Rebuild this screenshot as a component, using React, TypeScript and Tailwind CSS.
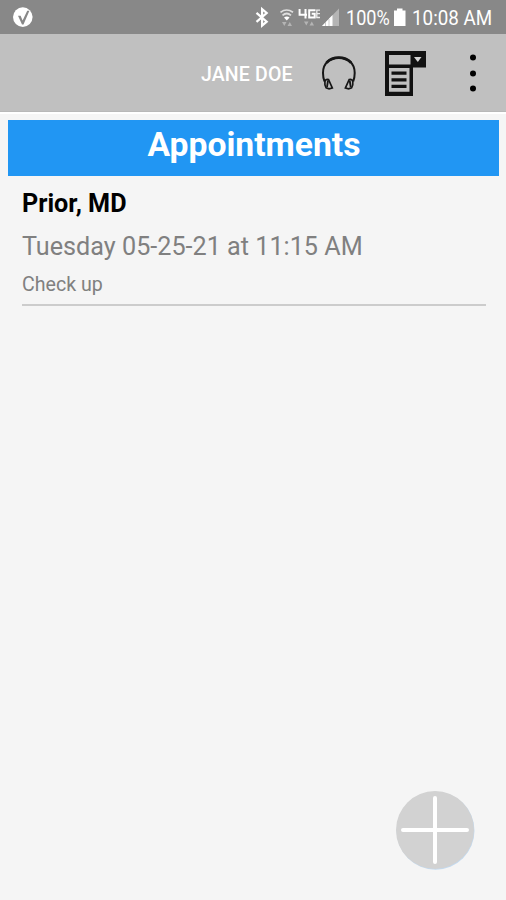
function StatusBar() {
  return (
    <div className="flex h-[34px] shrink-0 items-center bg-[#888888] text-white">
      <svg className="ml-[12px] h-[22px] w-[22px]" viewBox="0 0 22 22" aria-hidden="true">
        <circle cx="10.8" cy="11.1" r="9.8" fill="#fff" />
        <path d="M6 9.800h2.600l2 4.600L15.200 4.800h2.200L11.500 18.500h-1.500z" fill="#888" />
      </svg>
      <div className="ml-auto flex items-center">
        <svg className="h-[34px] w-[90px]" viewBox="250 0 90 34" aria-hidden="true">
          <path d="M255.500 12.800l10.200 8.900-4.600 4V9.100l4.600 3.900-10.200 8.900" fill="none" stroke="#fff" strokeWidth="2.200" />
          <g fill="none" stroke="#dedede">
            <path d="M279.500 12.300q6-4.600 12.500 0" strokeWidth="1.700" />
            <path d="M281.500 15.300q4.200-3.600 8.500 0" strokeWidth="1.700" />
          </g>
          <path d="M283 17.500q2.800-2 5.600 0l-2.800 3z" fill="#fff" />
          <path d="M281 22h4.500l-2.200 4zm5.500 4h4.500l-2.200-4zM303 21.500h4.500l-2.200 4zm5.500 4h4.500l-2.200-4z" fill="#b4b4b4" />
          <g fill="none" stroke="#fff">
            <path d="M298.600 9v5.800h7.400M304.500 9v9.500" strokeWidth="2" />
            <path d="M314.500 10.200h-6.300v7.200h5.500v-3.600h-3" strokeWidth="2" />
            <path d="M319 10.200h-3.200v7.300h3.200M315.500 13.700h3.500" strokeWidth="1.300" opacity=".85" />
          </g>
          <path d="M338 8.500V26h-17z" fill="#b5b5b5" />
          <path d="M331.500 15v11H321z" fill="#fff" />
          <path d="M324.500 22v4m3.500-7v7" stroke="#b5b5b5" strokeWidth=".7" />
        </svg>
        <span className="ml-[5px] w-[45px] whitespace-nowrap pt-[2px] text-[21px] leading-[24px]">
          <span className="inline-block origin-left scale-x-[.86]">100%</span>
        </span>
        <svg className="ml-[2px] h-[18px] w-[14px]" viewBox="0 0 14 18" aria-hidden="true">
          <path d="M4 .5h5.500v2h3V18H1V2.500h3z" fill="#fff" />
        </svg>
        <span className="ml-[3px] w-[96px] whitespace-nowrap pl-[2px] pt-[2px] text-[21px] leading-[24px]">
          <span className="inline-block origin-left scale-x-[.895]">10:08 AM</span>
        </span>
      </div>
    </div>
  );
}

function Toolbar() {
  return (
    <header className="flex h-[78px] shrink-0 items-center border-b border-[#b8b8b8] bg-[#c0c0c0]">
      <span className="ml-[201px] w-[100px] whitespace-nowrap pt-[5px] text-[19.500px] font-medium tracking-[.15px] text-white">JANE DOE</span>
      <button className="ml-[17px] h-[44px] w-[42px]" aria-label="Headphones">
        <svg className="h-[44px] w-[42px]" viewBox="318 51 42 44" fill="none" stroke="#161616" aria-hidden="true">
          <path d="M324.500 81.500q-1.500-4-1.500-8.500C323 63 330 57.700 338.800 57.700S354.700 63 354.700 73q0 4.500-1.500 8.500" strokeWidth="2" />
          <path d="M326.500 62.700q5-5 12.300-5t12.300 5" strokeWidth="2.800" />
          <path d="M328.500 79.500q-3-.5-3.600 2-.5 3.800 1.200 6.300l3 1 3.200-.8zM349.200 79.500q3-.5 3.600 2 .5 3.800-1.200 6.300l-3 1-3.200-.8z" strokeWidth="1.700" />
          <path d="M328 80.500l-1 6.500m22.700-6.500l1 6.500" strokeWidth="1.800" />
        </svg>
      </button>
      <button className="ml-[24px] h-[46px] w-[44px]" aria-label="Form">
        <svg className="h-[46px] w-[44px]" viewBox="384 50 44 46" aria-hidden="true">
          <path d="M385 51h41v16.500h-13V96h-28z" fill="#111" />
          <path d="M389 55h21.500v9.500H389zM389 68h20.500v23.800H389z" fill="#c0c0c0" />
          <path d="M414 57h7.500l-3.700 5z" fill="#d5d5d5" />
          <path d="M391.500 73.200h15m-15 6.600h15M391.500 86.400h15" stroke="#111" strokeWidth="3.200" />
        </svg>
      </button>
      <button className="ml-[41px] flex h-[37px] w-[8px] translate-y-[.5px] flex-col items-center justify-between" aria-label="More options">
        <span className="h-[6px] w-[6px] rounded-full bg-black" />
        <span className="h-[6px] w-[6px] rounded-full bg-black" />
        <span className="h-[6px] w-[6px] rounded-full bg-black" />
      </button>
    </header>
  );
}

export default function App() {
  return (
    <div className="flex h-[900px] w-[506px] flex-col overflow-hidden bg-[#f5f5f5] font-[Roboto,sans-serif]">
      <StatusBar />
      <Toolbar />
      <main className="flex flex-1 flex-col border-t-2 border-white px-[7px] pt-[6px]">
        <h1 className="ml-[1px] h-[56px] w-[491px] bg-[#2196f3] pl-[1px] pt-[4px] text-center text-[33.700px] font-bold leading-[42px] text-white">
          Appointments
        </h1>
        <section className="ml-[15px] mr-[13px] flex h-[130px] flex-col whitespace-nowrap border-b-2 border-[#cccccc] pt-[13px]">
          <h2 className="text-[25.200px] font-bold leading-[30px] text-black">Prior, MD</h2>
          <p className="mt-[13px] text-[25.200px] leading-[30px] text-[#808080]">Tuesday 05-25-21 at 11:15 AM</p>
          <p className="mt-[11px] text-[19.600px] leading-[24px] text-[#808080]">Check up</p>
        </section>
        <button className="mb-[29px] ml-auto mr-[24px] mt-auto h-[82px] w-[80px]" aria-label="Add appointment">
          <svg className="h-[82px] w-[80px]" viewBox="395 789 80 82" aria-hidden="true">
            <circle cx="435.500" cy="830.700" r="39" fill="#c3daf0" />
            <circle cx="435" cy="830" r="39" fill="#d2d2d2" />
            <path d="M435 798v64M403 830h64" stroke="#fff" strokeWidth="4" strokeLinecap="round" />
          </svg>
        </button>
      </main>
    </div>
  );
}
